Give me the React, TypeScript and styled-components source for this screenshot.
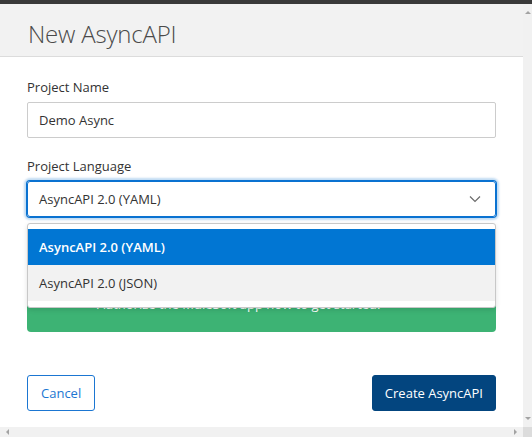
import styled, { createGlobalStyle } from "styled-components";

const GlobalStyle = createGlobalStyle`
  body {
    margin: 0;
    font-family: "Open Sans", "Noto Sans", "Liberation Sans", sans-serif;
    -webkit-font-smoothing: antialiased;
  }
`;

const Screen = styled.div`
  width: 532px;
  height: 437px;
  box-sizing: border-box;
  padding-top: 4px;
  background-color: #3a3a3a;
  display: grid;
  grid-template-columns: 1fr 9px;
  grid-template-rows: 1fr 10px;
  overflow: hidden;
`;

const Modal = styled.section`
  background-color: #ffffff;
  display: flex;
  flex-direction: column;
  min-height: 0;
`;

const Header = styled.header`
  height: 53px;
  box-sizing: border-box;
  padding: 7px 28px 0;
  background-color: #f2f2f2;
  border-bottom: 1px solid #dcdcdc;
  display: flex;
  align-items: center;
`;

const Title = styled.h2`
  margin: 0;
  font-size: 24px;
  font-weight: 300;
  color: #4a4a4a;
  letter-spacing: -0.2px;
`;

const Body = styled.div`
  padding: 21px 27px 0;
  display: flex;
  flex-direction: column;
`;

const Field = styled.div`
  display: flex;
  flex-direction: column;
  margin-bottom: ${(p: { $gap: number }) => p.$gap}px;
  position: relative;
`;

const Label = styled.label`
  font-size: 13px;
  line-height: 18px;
  color: #333333;
  margin-bottom: 6px;
`;

const Input = styled.div`
  height: 36px;
  box-sizing: border-box;
  border: 1px solid #cccccc;
  border-radius: 2px;
  padding: 0 11px;
  display: flex;
  align-items: center;
  font-size: 13px;
  color: #333333;
`;

const Select = styled(Input)`
  border-color: #0a72d1;
  border-radius: 3px;
  box-shadow: 0 0 0 1px #0a72d1, 0 0 2px 3px rgba(10, 114, 209, 0.25);
  justify-content: space-between;
`;

const Chevron = styled.svg`
  width: 12px;
  height: 8px;
  margin-right: 3px;
`;

const Menu = styled.ul`
  position: absolute;
  top: calc(100% + 6px);
  left: 0;
  right: 0;
  margin: 0;
  padding: 5px 0 6px;
  list-style: none;
  background-color: #ffffff;
  border: 1px solid #c8c8c8;
  border-radius: 3px;
  box-shadow: 0 2px 5px rgba(0, 0, 0, 0.12);
  z-index: 2;
`;

const Option = styled.li<{ $active?: boolean }>`
  height: 36px;
  padding: 0 11px;
  display: flex;
  align-items: center;
  font-size: 13px;
  font-weight: ${(p) => (p.$active ? 600 : 400)};
  color: ${(p) => (p.$active ? "#ffffff" : "#333333")};
  background-color: ${(p) => (p.$active ? "#0176d3" : "#f2f2f2")};
`;

const Notice = styled.div`
  height: 99px;
  box-sizing: border-box;
  padding: 0 16px 19px 70px;
  border-radius: 4px;
  background-color: #3db374;
  color: #ffffff;
  font-size: 13px;
  line-height: 18px;
  display: flex;
  align-items: flex-end;
`;

const Footer = styled.footer`
  margin-top: auto;
  padding: 0 27px 16px;
  display: flex;
  justify-content: space-between;
`;

const Button = styled.button<{ $primary?: boolean }>`
  height: 36px;
  box-sizing: border-box;
  padding: 0 ${(p) => (p.$primary ? 12 : 13)}px;
  border-radius: 3px;
  border: 1px solid ${(p) => (p.$primary ? "#03457f" : "#1b76d2")};
  background-color: ${(p) => (p.$primary ? "#03457f" : "#ffffff")};
  color: ${(p) => (p.$primary ? "#ffffff" : "#1b76d2")};
  font-family: inherit;
  font-size: 13px;
`;

const ScrollBar = styled.div<{ $horizontal?: boolean }>`
  background-color: #f1f1f1;
  display: flex;
  flex-direction: ${(p) => (p.$horizontal ? "row" : "column")};
  justify-content: space-between;
  align-items: center;
  padding: ${(p) => (p.$horizontal ? "0 6px" : "7px 0")};
`;

const Arrow = styled.span<{ $dir: "up" | "down" | "left" | "right" }>`
  width: 0;
  height: 0;
  border: 3px solid transparent;
  ${(p) =>
    p.$dir === "up"
      ? "border-bottom-color: #a3a3a3; border-top-width: 0;"
      : p.$dir === "down"
      ? "border-top-color: #a3a3a3; border-bottom-width: 0;"
      : p.$dir === "left"
      ? "border-right-color: #a3a3a3; border-left-width: 0;"
      : "border-left-color: #a3a3a3; border-right-width: 0;"}
`;

const Corner = styled.div`
  background-color: #dcdcdc;
`;

export default function App() {
  return (
    <>
      <GlobalStyle />
      <Screen>
        <Modal>
          <Header>
            <Title>New AsyncAPI</Title>
          </Header>
          <Body>
            <Field $gap={19}>
              <Label>Project Name</Label>
              <Input>Demo Async</Input>
            </Field>
            <Field $gap={16}>
              <Label>Project Language</Label>
              <Select>
                AsyncAPI 2.0 (YAML)
                <Chevron viewBox="0 0 12 8">
                  <path d="M1 1.5 L6 6.5 L11 1.5" fill="none" stroke="#6b6b6b" strokeWidth="1.2" />
                </Chevron>
              </Select>
              <Menu>
                <Option $active>AsyncAPI 2.0 (YAML)</Option>
                <Option>AsyncAPI 2.0 (JSON)</Option>
              </Menu>
            </Field>
            <Notice>Authorize the MuleSoft app now to get started.</Notice>
          </Body>
          <Footer>
            <Button>Cancel</Button>
            <Button $primary>Create AsyncAPI</Button>
          </Footer>
        </Modal>
        <ScrollBar>
          <Arrow $dir="up" />
          <Arrow $dir="down" />
        </ScrollBar>
        <ScrollBar $horizontal>
          <Arrow $dir="left" />
          <Arrow $dir="right" />
        </ScrollBar>
        <Corner />
      </Screen>
    </>
  );
}
